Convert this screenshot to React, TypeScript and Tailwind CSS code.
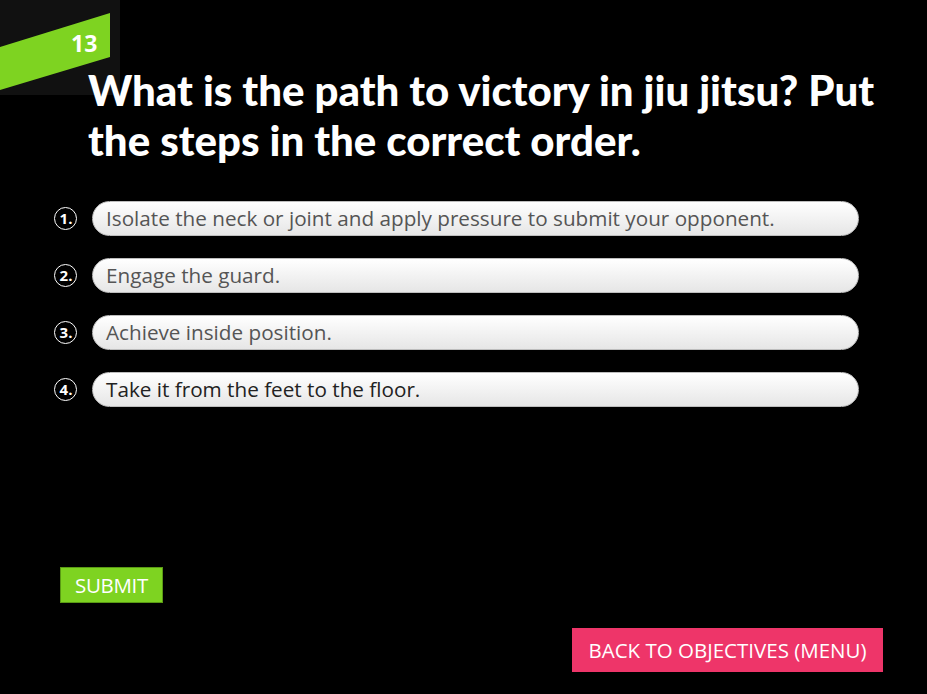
const steps = [
  { text: "Isolate the neck or joint and apply pressure to submit your opponent.", dark: false },
  { text: "Engage the guard.", dark: false },
  { text: "Achieve inside position.", dark: false },
  { text: "Take it from the feet to the floor.", dark: true },
]

export default function App() {
  return (
    <div className="relative h-[694px] w-[927px] overflow-hidden bg-black font-['Open_Sans',sans-serif]">
      {/* slide number badge */}
      <div className="absolute left-0 top-0 h-[95px] w-[120px] bg-[#111111]">
        <svg className="absolute left-0 top-0" width="120" height="95">
          <polygon points="0,47 110,13 110,57 0,90" fill="#7ed321" />
        </svg>
        <span className="absolute left-[71px] top-[26px] text-[23px] font-bold text-white">13</span>
      </div>

      <div className="relative flex h-full flex-col">
        <h1 className="ml-[88px] mt-[65px] w-[800px] font-['Lato',sans-serif] text-[42px] font-black leading-[50px] text-white">
          What is the path to victory in jiu jitsu? Put the steps in the correct order.
        </h1>

        <ol className="ml-[54px] mt-[36px] flex flex-col gap-[22px]">
          {steps.map((s, i) => (
            <li key={i} className="flex items-center gap-[15px]">
              <span className="flex h-[23px] w-[23px] items-center justify-center rounded-full border-[1.5px] border-white pl-[1px] text-[15px] font-bold leading-none text-white">
                {i + 1}.
              </span>
              <div
                className={`flex h-[35px] w-[767px] items-center rounded-full border border-[#bdbdbd] bg-gradient-to-b from-white to-[#e6e6e6] pl-[13px] text-[20.7px] ${
                  s.dark ? "text-[#222222]" : "text-[#555555]"
                }`}
              >
                {s.text}
              </div>
            </li>
          ))}
        </ol>

        <button className="ml-[60px] mt-[160px] h-[36px] w-[103px] border border-[#5a9a14] bg-[#7ed321] text-[20.5px] tracking-[-0.3px] text-white">
          SUBMIT
        </button>

        <div className="mr-[44px] mt-[25px] flex justify-end">
          <button className="h-[44px] w-[311px] bg-[#ee3569] text-[20.5px] text-white">
            BACK TO OBJECTIVES (MENU)
          </button>
        </div>
      </div>
    </div>
  )
}
